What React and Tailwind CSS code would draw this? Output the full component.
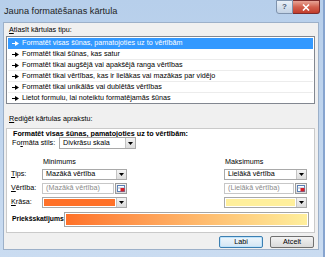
const items = [
  "Formatēt visas šūnas, pamatojoties uz to vērtībām",
  "Formatēt tikai šūnas, kas satur",
  "Formatēt tikai augšējā vai apakšējā ranga vērtības",
  "Formatēt tikai vērtības, kas ir lielākas vai mazākas par vidējo",
  "Formatēt tikai unikālās vai dublētās vērtības",
  "Lietot formulu, lai noteiktu formatējamās šūnas",
];

function RuleArrow({ white }) {
  const c = white ? "#ffffff" : "#000000";
  return (
    <svg width="7" height="5" viewBox="0 0 7 5" className="shrink-0">
      <rect x="0" y="2" width="3" height="1" fill={c} />
      <path d="M3 0 L7 2.5 L3 5 Z" fill={c} />
    </svg>
  );
}

function DropButton() {
  return (
    <div className="w-[10px] h-full flex items-center justify-center border-l border-[#c4c4c4] bg-gradient-to-b from-[#f4f4f4] to-[#dcdcdc]">
      <svg width="5" height="3" viewBox="0 0 5 3">
        <path d="M0 0 H5 L2.5 3 Z" fill="#000" />
      </svg>
    </div>
  );
}

function Dropdown({ text, width }) {
  return (
    <div className={`flex h-full bg-white border border-[#a9a9a9] ${width}`}>
      <div className="flex-1 flex items-center pl-[3px] whitespace-nowrap">{text}</div>
      <DropButton />
    </div>
  );
}

function ColorDropdown({ color }) {
  return (
    <div className="flex h-full w-full bg-white border border-[#a9a9a9]">
      <div className="flex-1 p-[1px]">
        <div className={`w-full h-full ${color}`} />
      </div>
      <DropButton />
    </div>
  );
}

function RangeButton() {
  return (
    <div className="w-[12px] h-full flex items-center justify-center border border-[#9a9a9a] bg-gradient-to-b from-[#f6f6f6] to-[#dadada]">
      <svg width="8" height="7" viewBox="0 0 8 7">
        <rect x="0.5" y="0.5" width="7" height="6" fill="#ffffff" stroke="#5a7fb4" />
        <line x1="0.5" y1="3" x2="7.5" y2="3" stroke="#9fb6d6" />
        <rect x="3.5" y="3" width="4" height="3.5" fill="#d6202a" />
      </svg>
    </div>
  );
}

function ValueInput({ text }) {
  return (
    <div className="flex h-full w-full gap-[1px]">
      <div className="flex-1 flex items-center pl-[3px] bg-white border border-[#c7c7c7] text-[#8a8a8a] whitespace-nowrap">
        {text}
      </div>
      <RangeButton />
    </div>
  );
}

export default function App() {
  return (
    <div className="w-[325px] h-[257px] flex flex-col overflow-hidden bg-gradient-to-b from-[#b7cfeb] to-[#cadcf1] border-r-2 border-[#86a4cf] font-['Liberation_Sans',Arial,sans-serif] text-[7.2px] text-black">
      {/* title bar */}
      <div className="h-[22px] flex items-start shrink-0">
        <div className="ml-[4px] mt-[6px] text-[9.2px] leading-[10px] text-[#1e1e1e]">Jauna formatēšanas kārtula</div>
        <div className="ml-auto mr-[3px] flex">
          <div className="w-[17px] h-[14px] flex items-center justify-center border border-[#7f93ad] rounded-bl-[3px] bg-gradient-to-b from-[#e9f0f8] to-[#c3d2e4] text-[8px] text-[#4a5a70] font-bold">?</div>
          <div className="w-[27px] h-[14px] flex items-center justify-center border border-l-0 border-[#7c2b2b] rounded-br-[3px] bg-gradient-to-b from-[#e7a496] via-[#d2604e] to-[#c23c2b]">
            <svg width="8" height="7" viewBox="0 0 8 7">
              <path d="M1 0.5 L7 6.5 M7 0.5 L1 6.5" stroke="#ffffff" strokeWidth="1.6" />
            </svg>
          </div>
        </div>
      </div>

      {/* content */}
      <div className="ml-[3px] w-[316px] h-[228px] shrink-0 flex flex-col bg-[#f0f0f0] border border-[#9cb0c9]">
        <div className="mt-[3px] h-[8px] leading-[8px] pl-[5px]">
          <span className="underline">A</span>tlasīt kārtulas tipu:
        </div>

        <div className="mt-[2px] ml-[2px] w-[309px] h-[68px] flex flex-col bg-white border border-[#828790] p-[1px]">
          {items.map((t, i) => (
            <div
              key={t}
              className={`h-[11px] flex items-center gap-[3px] pl-[4px] border-b ${
                i === 0 ? "bg-[#3399ff] text-white border-[#3399ff]" : "border-[#ececec]"
              } ${i === items.length - 1 ? "border-b-0" : ""}`}
            >
              <RuleArrow white={i === 0} />
              <span className="whitespace-nowrap">{t}</span>
            </div>
          ))}
        </div>

        <div className="mt-[11px] h-[8px] leading-[8px] pl-[5px]">
          <span className="underline">R</span>ediģēt kārtulas aprakstu:
        </div>

        <div className="mt-[5px] ml-[2px] w-[309px] h-[105px] flex flex-col bg-white border border-[#cacaca]">
          <div className="mt-[1px] h-[7px] leading-[7px] pl-[6px] text-[7.2px] font-bold whitespace-nowrap">
            Formatēt visas šūnas, pamatojoties uz to vērtībām:
          </div>

          <div className="h-[12px] flex items-center">
            <div className="w-[52px] pl-[5px] whitespace-nowrap">
              Fo<span className="underline">r</span>māta stils:
            </div>
            <Dropdown text="Divkrāsu skala" width="w-[77px]" />
          </div>

          <div className="mt-[9px] h-[8px] leading-[8px] flex">
            <div className="w-[35px]" />
            <div className="w-[85px] pl-[1px]">Minimums</div>
            <div className="w-[97px]" />
            <div className="w-[83px] pl-[1px]">Maksimums</div>
          </div>

          <div className="mt-[3px] flex flex-col gap-[3px]">
            <div className="h-[11px] flex items-center">
              <div className="w-[35px] pl-[4px]">
                <span className="underline">T</span>ips:
              </div>
              <Dropdown text="Mazākā vērtība" width="w-[85px]" />
              <div className="w-[97px]" />
              <Dropdown text="Lielākā vērtība" width="w-[83px]" />
            </div>
            <div className="h-[11px] flex items-center">
              <div className="w-[35px] pl-[4px]">
                <span className="underline">V</span>ērtība:
              </div>
              <div className="w-[85px] h-full">
                <ValueInput text="(Mazākā vērtība)" />
              </div>
              <div className="w-[97px]" />
              <div className="w-[83px] h-full">
                <ValueInput text="(Lielākā vērtība)" />
              </div>
            </div>
            <div className="h-[11px] flex items-center">
              <div className="w-[35px] pl-[4px]">
                <span className="underline">K</span>rāsa:
              </div>
              <div className="w-[85px] h-full">
                <ColorDropdown color="bg-[#ff7128]" />
              </div>
              <div className="w-[97px]" />
              <div className="w-[83px] h-full">
                <ColorDropdown color="bg-[#ffef9c]" />
              </div>
            </div>
          </div>

          <div className="mt-[4px] h-[15px] flex items-center">
            <div className="w-[57px] pl-[5px] text-[6.8px] font-bold whitespace-nowrap">Priekšskatījums:</div>
            <div className="w-[245px] h-full border border-[#a5a5a5] p-[1px] bg-white">
              <div className="w-full h-full bg-gradient-to-r from-[#ff7128] to-[#ffef9c]" />
            </div>
          </div>
        </div>

        <div className="mt-[3px] h-[12px] flex justify-end gap-[7px] pr-[4px]">
          <div className="w-[44px] h-full flex items-center justify-center rounded-[2px] border border-[#3c7fb1] bg-gradient-to-b from-[#eef6fc] to-[#d3e6f4] shadow-[inset_0_0_0_1px_#bfe3fb]">
            Labi
          </div>
          <div className="w-[44px] h-full flex items-center justify-center rounded-[2px] border border-[#707070] bg-gradient-to-b from-[#f2f2f2] to-[#dadada]">
            Atcelt
          </div>
        </div>
      </div>
    </div>
  );
}
